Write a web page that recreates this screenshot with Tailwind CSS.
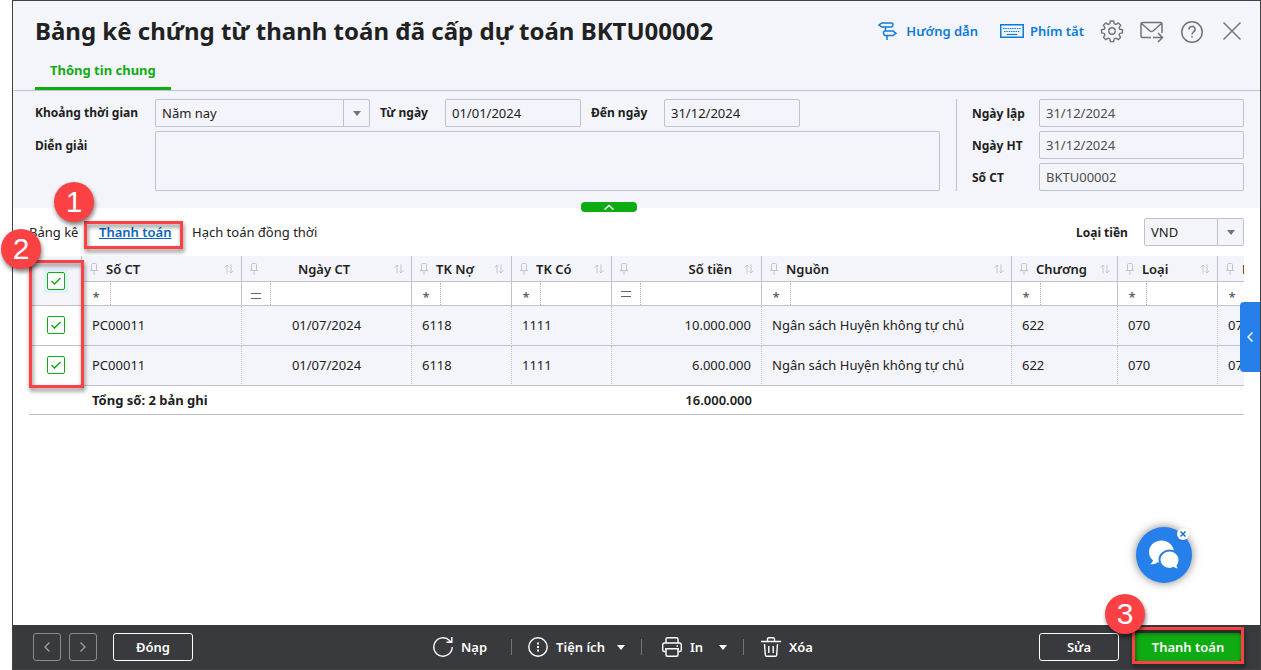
<!DOCTYPE html>
<html lang="vi">
<head>
    <meta charset="UTF-8">
    <meta name="viewport" content="width=device-width, initial-scale=1.0">
    <title>Bảng kê chứng từ thanh toán</title>
    <script src="https://cdn.jsdelivr.net/npm/@tailwindcss/browser@4"></script>
</head>
<body class="bg-white font-['Noto_Sans',sans-serif] text-[13px] leading-5 text-[#212121]">
    <!-- Shared icons -->
    <svg class="hidden">
        <symbol id="pin" viewBox="0 0 8 12"><path d="M1.500 7V1.500q0-1 1-1h3q1 0 1 1V7M0 7.500h8M4 8v4" fill="none" stroke="currentColor"/></symbol>
        <symbol id="sort" viewBox="0 0 10 10"><path d="M3 9.500V1M.5 3.500 3 1l1.500 1.500M7 .5V9M5.500 7.500 7 9l2.500-2.500" fill="none" stroke="currentColor"/></symbol>
        <symbol id="equals" viewBox="0 0 10 6"><path d="M0 .5h10M0 5.500h10" stroke="currentColor"/></symbol>
        <symbol id="caret" viewBox="0 0 8 5"><path d="M0 0h8L4 5z" fill="currentColor"/></symbol>
    </svg>

    <main class="relative ml-3 flex min-h-screen flex-col border border-[#414144]">
        <header class="border-b border-[#c0c1cb] bg-[#f4f5fa] pr-4 pl-[22px]">
            <div class="flex h-14 items-center justify-between pt-1">
                <h1 class="text-2xl font-bold">Bảng kê chứng từ thanh toán đã cấp dự toán BKTU00002</h1>
                <div class="flex items-center text-[#737373]">
                    <a href="#" class="flex items-center gap-2 font-semibold text-[#0b7bdc]">
                        <svg class="size-5" viewBox="0 0 20 20" fill="none" stroke="currentColor" stroke-width="1.500"><path d="M4 2h9.500q1.500 0 1.500 1.500T13.500 6H4L1 4zM7.500 6v4M15 10H7q-1.500 0-1.500 2T7 14.500h8l3-2.200zM9 14.500V19"/></svg>
                        Hướng dẫn
                    </a>
                    <a href="#" class="ml-[22px] flex items-center gap-[6px] font-semibold text-[#0b7bdc]">
                        <svg class="h-[14px] w-6" viewBox="0 0 24 14" fill="none" stroke="currentColor"><rect x=".75" y=".75" width="22.500" height="12.500" stroke-width="1.500"/><path d="M3 4.500h18M4 7.500h16" stroke-dasharray="1.500 .8" stroke-width="1.200"/><path d="M7 10.500h10" stroke-width="1.200"/></svg>
                        Phím tắt
                    </a>
                    <button aria-label="Thiết lập" class="ml-4">
                        <svg class="size-6" viewBox="0 0 24 24" fill="none" stroke="currentColor" stroke-width="1.400" stroke-linejoin="round"><circle cx="12" cy="12" r="3.200"/><path d="M10.300 2h3.400l.5 2.700 1.800.8 2.300-1.600 2.400 2.400L19.100 8.600l.7 1.700 2.700.4v3.200l-2.700.5-.7 1.700 1.600 2.200-2.400 2.400-2.300-1.500-1.800.7-.5 2.700h-3.400l-.5-2.700-1.700-.7-2.300 1.500-2.400-2.400 1.500-2.200-.7-1.700-2.700-.5v-3.200l2.700-.4.7-1.700-1.500-2.300 2.400-2.400 2.300 1.600 1.700-.8z"/></svg>
                    </button>
                    <button aria-label="Gửi thư" class="ml-4">
                        <svg class="size-6" viewBox="0 0 24 24" fill="none" stroke="currentColor" stroke-width="1.500"><path d="M11 18.500H2.500Q1 18.500 1 17V5q0-1.500 1.500-1.500h18Q22 3.500 22 5v9M1.500 4.500l8.500 7.500q1.500 1 3 0l8.500-7.500M13 18.500h9.500M18 14l4.500 4.500L18 23"/></svg>
                    </button>
                    <button aria-label="Trợ giúp" class="ml-4">
                        <svg class="size-6" viewBox="0 0 24 24" fill="none" stroke="currentColor" stroke-width="1.500"><circle cx="12" cy="13" r="10.200"/><path d="M9 10.500a3 3 0 1 1 4.500 2.500c-1 .7-1.500 1.200-1.500 2.500"/><path d="M12 17v1.500"/></svg>
                    </button>
                    <button aria-label="Đóng cửa sổ" class="ml-4">
                        <svg class="size-6" viewBox="0 0 24 24" fill="none" stroke="currentColor" stroke-width="1.500"><path d="m3.500 3.500 17 17m0-17-17 17"/></svg>
                    </button>
                </div>
            </div>
            <nav class="flex">
                <a href="#" class="flex h-[33px] items-center border-b-3 border-[#0fab12] px-[15px] pb-[5px] font-bold text-[#0fab12]">Thông tin chung</a>
            </nav>
        </header>

        <section class="relative flex bg-[#f4f5fa] pt-2 pr-4 pb-[17px] pl-[22px]">
            <div class="grid flex-1 grid-cols-[120px_1fr] gap-y-1 pr-4">
                <label for="period" class="pt-1 text-xs leading-5 font-bold">Khoảng thời gian</label>
                <div class="flex items-center">
                    <div class="relative w-[215px]">
                        <select id="period" class="block h-7 w-full appearance-none rounded-xs border border-[#c0c1cb] bg-[#f4f5fa] px-[6px]"><option>Năm nay</option></select>
                        <span class="pointer-events-none absolute inset-y-px right-px flex w-[26px] items-center justify-center border-l border-[#c0c1cb] text-[#737373]"><svg class="h-[5px] w-2"><use href="#caret"/></svg></span>
                    </div>
                    <label for="from" class="w-[75px] pl-[10px] text-xs leading-5 font-bold">Từ ngày</label>
                    <input id="from" value="01/01/2024" class="h-7 w-[136px] rounded-xs border border-[#c0c1cb] px-[6px]">
                    <label for="to" class="w-[83px] pl-[10px] text-xs leading-5 font-bold">Đến ngày</label>
                    <input id="to" value="31/12/2024" class="h-7 w-[136px] rounded-xs border border-[#c0c1cb] px-[6px]">
                </div>
                <label for="note" class="pt-[5px] text-xs leading-5 font-bold">Diễn giải</label>
                <textarea id="note" class="block h-15 resize-none rounded-xs border border-[#c0c1cb] px-[6px]"></textarea>
            </div>
            <div class="grid grid-cols-[67px_205px] items-center gap-y-1 border-l border-[#c0c1cb] pl-[15px]">
                <label for="created" class="pt-[2px] text-xs leading-5 font-bold">Ngày lập</label>
                <input id="created" value="31/12/2024" class="h-7 rounded-xs border border-[#c0c1cb] px-[6px] text-[#4d4d4f]">
                <label for="posted" class="pt-[2px] text-xs leading-5 font-bold">Ngày HT</label>
                <input id="posted" value="31/12/2024" class="h-7 rounded-xs border border-[#c0c1cb] px-[6px] text-[#4d4d4f]">
                <label for="number" class="pt-[2px] text-xs leading-5 font-bold">Số CT</label>
                <input id="number" value="BKTU00002" class="h-7 rounded-xs border border-[#c0c1cb] px-[6px] text-[#4d4d4f]">
            </div>
            <button aria-label="Thu gọn" class="absolute -bottom-1 left-[568px] flex h-[10px] w-14 items-center justify-center rounded-[4px] bg-[#0fab12]">
                <svg class="h-[6px] w-[10px]" viewBox="0 0 10 6" fill="none" stroke="white" stroke-width="1.500"><path d="m.5 5.500 4.500-4 4.500 4"/></svg>
            </button>
        </section>

        <div class="flex h-12 items-center justify-between pr-4 pl-4">
            <nav class="flex">
                <a href="#" class="w-[70px]">Bảng kê</a>
                <div class="relative w-[93px]">
                    <a href="#" class="font-semibold text-[#0a66c2] underline">Thanh toán</a>
                    <div class="pointer-events-none absolute -top-[1px] -left-[15px] h-7 w-[99px] border-3 border-[#fc4144] drop-shadow-[1px_3px_2px_rgb(0_0_0/0.5)]"></div>
                    <div class="absolute -top-10 -left-[45px] flex size-10 items-center justify-center rounded-full bg-[#fc4144] font-['Liberation_Sans',sans-serif] text-3xl font-normal text-white shadow-[1px_3px_4px_rgb(0_0_0/0.5)]">1</div>
                </div>
                <a href="#">Hạch toán đồng thời</a>
            </nav>
            <div class="flex items-center">
                <label for="currency" class="w-17 pt-[2px] text-xs leading-5 font-bold">Loại tiền</label>
                <div class="relative w-[100px]">
                    <select id="currency" class="block h-7 w-full appearance-none rounded-xs border border-[#c0c1cb] bg-[#f4f5fa] px-[6px]"><option>VND</option></select>
                    <span class="pointer-events-none absolute inset-y-px right-px flex w-[26px] items-center justify-center border-l border-[#c0c1cb] text-[#737373]"><svg class="h-[5px] w-2"><use href="#caret"/></svg></span>
                </div>
            </div>
        </div>

        <section class="relative mr-4 ml-4 flex-1">
            <div class="overflow-hidden">
                <table class="w-[1289px] table-fixed border-separate border-spacing-0">
                    <colgroup>
                        <col class="w-[53px]"><col class="w-[160px]"><col class="w-[170px]"><col class="w-[100px]"><col class="w-[100px]"><col class="w-[150px]"><col class="w-[250px]"><col class="w-[106px]"><col class="w-[100px]"><col class="w-[100px]">
                    </colgroup>
                    <thead class="[&_td]:border-r [&_td]:border-b [&_td]:border-[#c0c1cb] [&_td]:p-0 [&_th]:border-r [&_th]:border-b [&_th]:border-[#c0c1cb] [&_th]:bg-[#f4f5fa] [&_th]:p-0 [&_th]:font-semibold">
                        <tr class="h-[26px] [&_svg]:shrink-0 [&_svg]:text-[#c4c5cc]">
                            <th rowspan="2">
                                <span class="ml-[15px] flex size-6 items-center justify-center bg-[#e2f0fd]">
                                    <input type="checkbox" checked aria-label="Chọn tất cả" class="size-[18px] shrink-0 appearance-none rounded-xs border border-[#0fab12] bg-white">
                                    <svg class="pointer-events-none absolute h-2 w-[10px]" viewBox="0 0 10 8" fill="none" stroke="#0fab12" stroke-width="1.500"><path d="m.5 4 3 3L9.500 1"/></svg>
                                </span>
                            </th>
                            <th><div class="flex items-center pr-[7px] pl-2"><svg class="mr-2 h-3 w-2"><use href="#pin"/></svg><span class="flex-1 text-left">Số CT</span><svg class="size-[10px]"><use href="#sort"/></svg></div></th>
                            <th><div class="flex items-center pr-[7px] pl-2"><svg class="mr-2 h-3 w-2"><use href="#pin"/></svg><span class="flex-1 pr-3 text-center">Ngày CT</span><svg class="size-[10px]"><use href="#sort"/></svg></div></th>
                            <th><div class="flex items-center pr-[7px] pl-2"><svg class="mr-2 h-3 w-2"><use href="#pin"/></svg><span class="flex-1 text-left">TK Nợ</span><svg class="size-[10px]"><use href="#sort"/></svg></div></th>
                            <th><div class="flex items-center pr-[7px] pl-2"><svg class="mr-2 h-3 w-2"><use href="#pin"/></svg><span class="flex-1 text-left">TK Có</span><svg class="size-[10px]"><use href="#sort"/></svg></div></th>
                            <th><div class="flex items-center pr-[7px] pl-2"><svg class="mr-2 h-3 w-2"><use href="#pin"/></svg><span class="flex-1 pr-3 text-right">Số tiền</span><svg class="size-[10px]"><use href="#sort"/></svg></div></th>
                            <th><div class="flex items-center pr-[7px] pl-2"><svg class="mr-2 h-3 w-2"><use href="#pin"/></svg><span class="flex-1 text-left">Nguồn</span><svg class="size-[10px]"><use href="#sort"/></svg></div></th>
                            <th><div class="flex items-center pr-[7px] pl-2"><svg class="mr-2 h-3 w-2"><use href="#pin"/></svg><span class="flex-1 text-left">Chương</span><svg class="size-[10px]"><use href="#sort"/></svg></div></th>
                            <th><div class="flex items-center pr-[7px] pl-2"><svg class="mr-2 h-3 w-2"><use href="#pin"/></svg><span class="flex-1 text-left">Loại</span><svg class="size-[10px]"><use href="#sort"/></svg></div></th>
                            <th><div class="flex items-center pr-[7px] pl-2"><svg class="mr-2 h-3 w-2"><use href="#pin"/></svg><span class="flex-1 text-left">Khoản</span><svg class="size-[10px]"><use href="#sort"/></svg></div></th>
                        </tr>
                        <tr class="h-6 text-[#616161] [&_button]:h-[22px] [&_button]:w-7 [&_button]:shrink-0 [&_input]:h-[22px] [&_input]:w-full [&_input]:min-w-0 [&_input]:border-l [&_input]:border-dotted [&_input]:border-[#b4b5bf]">
                            <td><div class="flex"><button class="pt-1 font-semibold">*</button><input aria-label="Lọc Số CT"></div></td>
                            <td><div class="flex"><button aria-label="Bằng" class="pt-1"><svg class="mx-auto h-[6px] w-[10px]"><use href="#equals"/></svg></button><input aria-label="Lọc Ngày CT"></div></td>
                            <td><div class="flex"><button class="pt-1 font-semibold">*</button><input aria-label="Lọc TK Nợ"></div></td>
                            <td><div class="flex"><button class="pt-1 font-semibold">*</button><input aria-label="Lọc TK Có"></div></td>
                            <td><div class="flex"><button aria-label="Bằng"><svg class="mx-auto h-[6px] w-[10px]"><use href="#equals"/></svg></button><input aria-label="Lọc Số tiền"></div></td>
                            <td><div class="flex"><button class="pt-1 font-semibold">*</button><input aria-label="Lọc Nguồn"></div></td>
                            <td><div class="flex"><button class="pt-1 font-semibold">*</button><input aria-label="Lọc Chương"></div></td>
                            <td><div class="flex"><button class="pt-1 font-semibold">*</button><input aria-label="Lọc Loại"></div></td>
                            <td><div class="flex"><button class="pt-1 font-semibold">*</button><input aria-label="Lọc Khoản"></div></td>
                        </tr>
                    </thead>
                    <tbody class="[&_td]:border-r [&_td]:border-b [&_td]:border-[#c0c1cb] [&_td]:[border-right-style:dotted] [&_td]:bg-[#f4f5fa] [&_td]:px-[10px] [&_td]:pb-px">
                        <tr class="h-10">
                            <td class="bg-white!">
                                <span class="ml-2 flex w-[18px] items-center justify-center">
                                    <input type="checkbox" checked aria-label="Chọn dòng 1" class="size-[18px] shrink-0 appearance-none rounded-xs border border-[#0fab12] bg-white">
                                    <svg class="pointer-events-none absolute h-2 w-[10px]" viewBox="0 0 10 8" fill="none" stroke="#0fab12" stroke-width="1.500"><path d="m.5 4 3 3L9.500 1"/></svg>
                                </span>
                            </td>
                            <td>PC00011</td>
                            <td class="text-center">01/07/2024</td>
                            <td>6118</td>
                            <td>1111</td>
                            <td class="text-right">10.000.000</td>
                            <td>Ngân sách Huyện không tự chủ</td>
                            <td>622</td>
                            <td>070</td>
                            <td>071</td>
                        </tr>
                        <tr class="h-10">
                            <td class="bg-white!">
                                <span class="ml-2 flex w-[18px] items-center justify-center">
                                    <input type="checkbox" checked aria-label="Chọn dòng 2" class="size-[18px] shrink-0 appearance-none rounded-xs border border-[#0fab12] bg-white">
                                    <svg class="pointer-events-none absolute h-2 w-[10px]" viewBox="0 0 10 8" fill="none" stroke="#0fab12" stroke-width="1.500"><path d="m.5 4 3 3L9.500 1"/></svg>
                                </span>
                            </td>
                            <td>PC00011</td>
                            <td class="text-center">01/07/2024</td>
                            <td>6118</td>
                            <td>1111</td>
                            <td class="text-right">6.000.000</td>
                            <td>Ngân sách Huyện không tự chủ</td>
                            <td>622</td>
                            <td>070</td>
                            <td>071</td>
                        </tr>
                    </tbody>
                    <tfoot class="font-bold [&_td]:border-b [&_td]:border-[#c0c1cb] [&_td]:px-[10px] [&_td]:py-0">
                        <tr class="h-[29px]">
                            <td></td>
                            <td colspan="4">Tổng số: 2 bản ghi</td>
                            <td class="text-right font-semibold">16.000.000</td>
                            <td colspan="4"></td>
                        </tr>
                    </tfoot>
                </table>
            </div>
            <div class="pointer-events-none absolute top-1 left-0 h-32 w-[55px] border-3 border-[#fc4144] drop-shadow-[1px_3px_2px_rgb(0_0_0/0.5)]"></div>
            <div class="absolute -top-[27px] -left-7 flex size-10 items-center justify-center rounded-full bg-[#fc4144] font-['Liberation_Sans',sans-serif] text-3xl font-normal text-white shadow-[1px_3px_4px_rgb(0_0_0/0.5)]">2</div>
            <button aria-label="Mở bảng bên" class="absolute top-[46px] -right-4 flex h-[70px] w-5 items-center justify-center rounded-l-[4px] bg-[#2680eb]">
                <svg class="h-[10px] w-[6px]" viewBox="0 0 6 10" fill="none" stroke="white" stroke-width="1.500"><path d="M5.500.5 1 5l4.500 4.500"/></svg>
            </button>
            <button aria-label="Trò chuyện" class="absolute right-[52px] bottom-[42px] flex size-14 items-center justify-center rounded-full bg-[#2680eb] shadow-[0_0_10px_rgb(0_0_0/0.5)]">
                <svg class="size-8" viewBox="0 0 32 32"><path d="M13.500 1.500C6.500 1.500 1 6.500 1 13c0 3.500 1.500 6.300 4 8.300-.4 1.800-1.300 3-3 4 3.300.3 5.800-.5 7.500-2.100 1.200.4 2.500.6 4 .6C20 23.800 26 19 26 13S20.500 1.500 13.500 1.500z" fill="white"/><path d="M21.500 11.500c-5.500 0-10 4-10 9.200s4.500 9.200 10 9.200c1.600 0 3-.3 4.300-.9 1.500 1.200 3.500 1.700 6.200 1.400-1.300-.9-2.200-2.100-2.500-3.600 1.200-1.600 2-3.700 2-6.100 0-5.200-4.500-9.200-10-9.200z" fill="white" stroke="#2680eb" stroke-width="2"/></svg>
            </button>
            <button aria-label="Ẩn trò chuyện" class="absolute right-[55px] bottom-[85px] flex size-3 items-center justify-center rounded-full bg-white shadow-sm">
                <svg class="size-[6px]" viewBox="0 0 6 6" stroke="#1673c8" stroke-width="1.500"><path d="m.5.5 5 5m0-5-5 5"/></svg>
            </button>
        </section>

        <footer class="grid h-11 grid-cols-[1fr_auto_1fr] items-center bg-[#393a3d] pr-[19px] pl-5 font-semibold text-white">
            <div class="flex">
                <button aria-label="Trước" class="flex size-7 items-center justify-center rounded-[3px] border border-[#8b8c8f] text-[#a0a1a3]"><svg class="h-[10px] w-[6px]" viewBox="0 0 6 10" fill="none" stroke="currentColor" stroke-width="1.300"><path d="M5.500.5 1 5l4.500 4.500"/></svg></button>
                <button aria-label="Sau" class="ml-2 flex size-7 items-center justify-center rounded-[3px] border border-[#8b8c8f] text-[#a0a1a3]"><svg class="h-[10px] w-[6px]" viewBox="0 0 6 10" fill="none" stroke="currentColor" stroke-width="1.300"><path d="M.5.5 5 5 .5 9.500"/></svg></button>
                <button class="ml-4 h-7 w-20 rounded-[3px] border border-white">Đóng</button>
            </div>
            <div class="flex items-center pr-7">
                <button class="flex items-center gap-2">
                    <svg class="size-5" viewBox="0 0 20 20" fill="none" stroke="currentColor" stroke-width="1.400"><path d="M19.200 10A9.200 9.200 0 1 1 16.500 3.500L18 5M18.800 0v5.300h-5.300"/></svg>
                    Nạp
                </button>
                <span class="mx-6 h-4 w-px bg-[#737477]"></span>
                <button class="-ml-2 flex items-center gap-2">
                    <svg class="size-5" viewBox="0 0 20 20" fill="none" stroke="currentColor" stroke-width="1.400"><circle cx="10" cy="10" r="9.200"/><path d="M10 5.500v2M10 9v2M10 12.500v2" stroke-width="2"/></svg>
                    Tiện ích
                    <svg class="ml-1 h-[5px] w-2"><use href="#caret"/></svg>
                </button>
                <span class="ml-4 h-4 w-px bg-[#737477]"></span>
                <button class="ml-5 flex items-center gap-2">
                    <svg class="size-5" viewBox="0 0 20 20" fill="none" stroke="currentColor" stroke-width="1.400"><path d="M4 6V2.200C4 1.200 4.700.7 5.500.7h9c.8 0 1.500.5 1.500 1.500V6M4 14.500H2.200c-1 0-1.500-.6-1.500-1.500V8c0-1.200.7-2 2-2h14.600c1.300 0 2 .8 2 2v5c0 .9-.5 1.500-1.500 1.500H16M3 11.700h14M4 11.700v6.100c0 1 .6 1.500 1.500 1.500h9c.9 0 1.500-.5 1.500-1.500v-6.100M14.500 9h1.500"/></svg>
                    In
                    <svg class="ml-2 h-[5px] w-2"><use href="#caret"/></svg>
                </button>
                <span class="ml-4 h-4 w-px bg-[#737477]"></span>
                <button class="ml-[17px] flex items-center gap-2">
                    <svg class="size-5" viewBox="0 0 20 20" fill="none" stroke="currentColor" stroke-width="1.400"><path d="M0 4.500h20M6.500 4.500V2.200c0-1 .6-1.500 1.500-1.500h4c.9 0 1.500.5 1.500 1.500v2.300M3.500 7l.8 11c.1.900.6 1.300 1.400 1.300h8.600c.8 0 1.300-.4 1.400-1.300l.8-11M7.800 9v7M12.200 9v7"/></svg>
                    Xóa
                </button>
            </div>
            <div class="flex justify-end gap-4">
                <button class="h-7 w-20 rounded-[3px] border border-white">Sửa</button>
                <div class="relative">
                    <button class="h-7 w-[106px] rounded-[3px] bg-[#0fab12]">Thanh toán</button>
                    <div class="pointer-events-none absolute -inset-x-[3px] -top-[6px] -bottom-[3px] border-3 border-[#fc4144] drop-shadow-[1px_3px_2px_rgb(0_0_0/0.5)]"></div>
                    <div class="absolute -top-[39px] -left-[30px] flex size-10 items-center justify-center rounded-full bg-[#fc4144] font-['Liberation_Sans',sans-serif] text-3xl font-normal text-white shadow-[1px_3px_4px_rgb(0_0_0/0.5)]">3</div>
                </div>
            </div>
        </footer>
    </main>
</body>
</html>
